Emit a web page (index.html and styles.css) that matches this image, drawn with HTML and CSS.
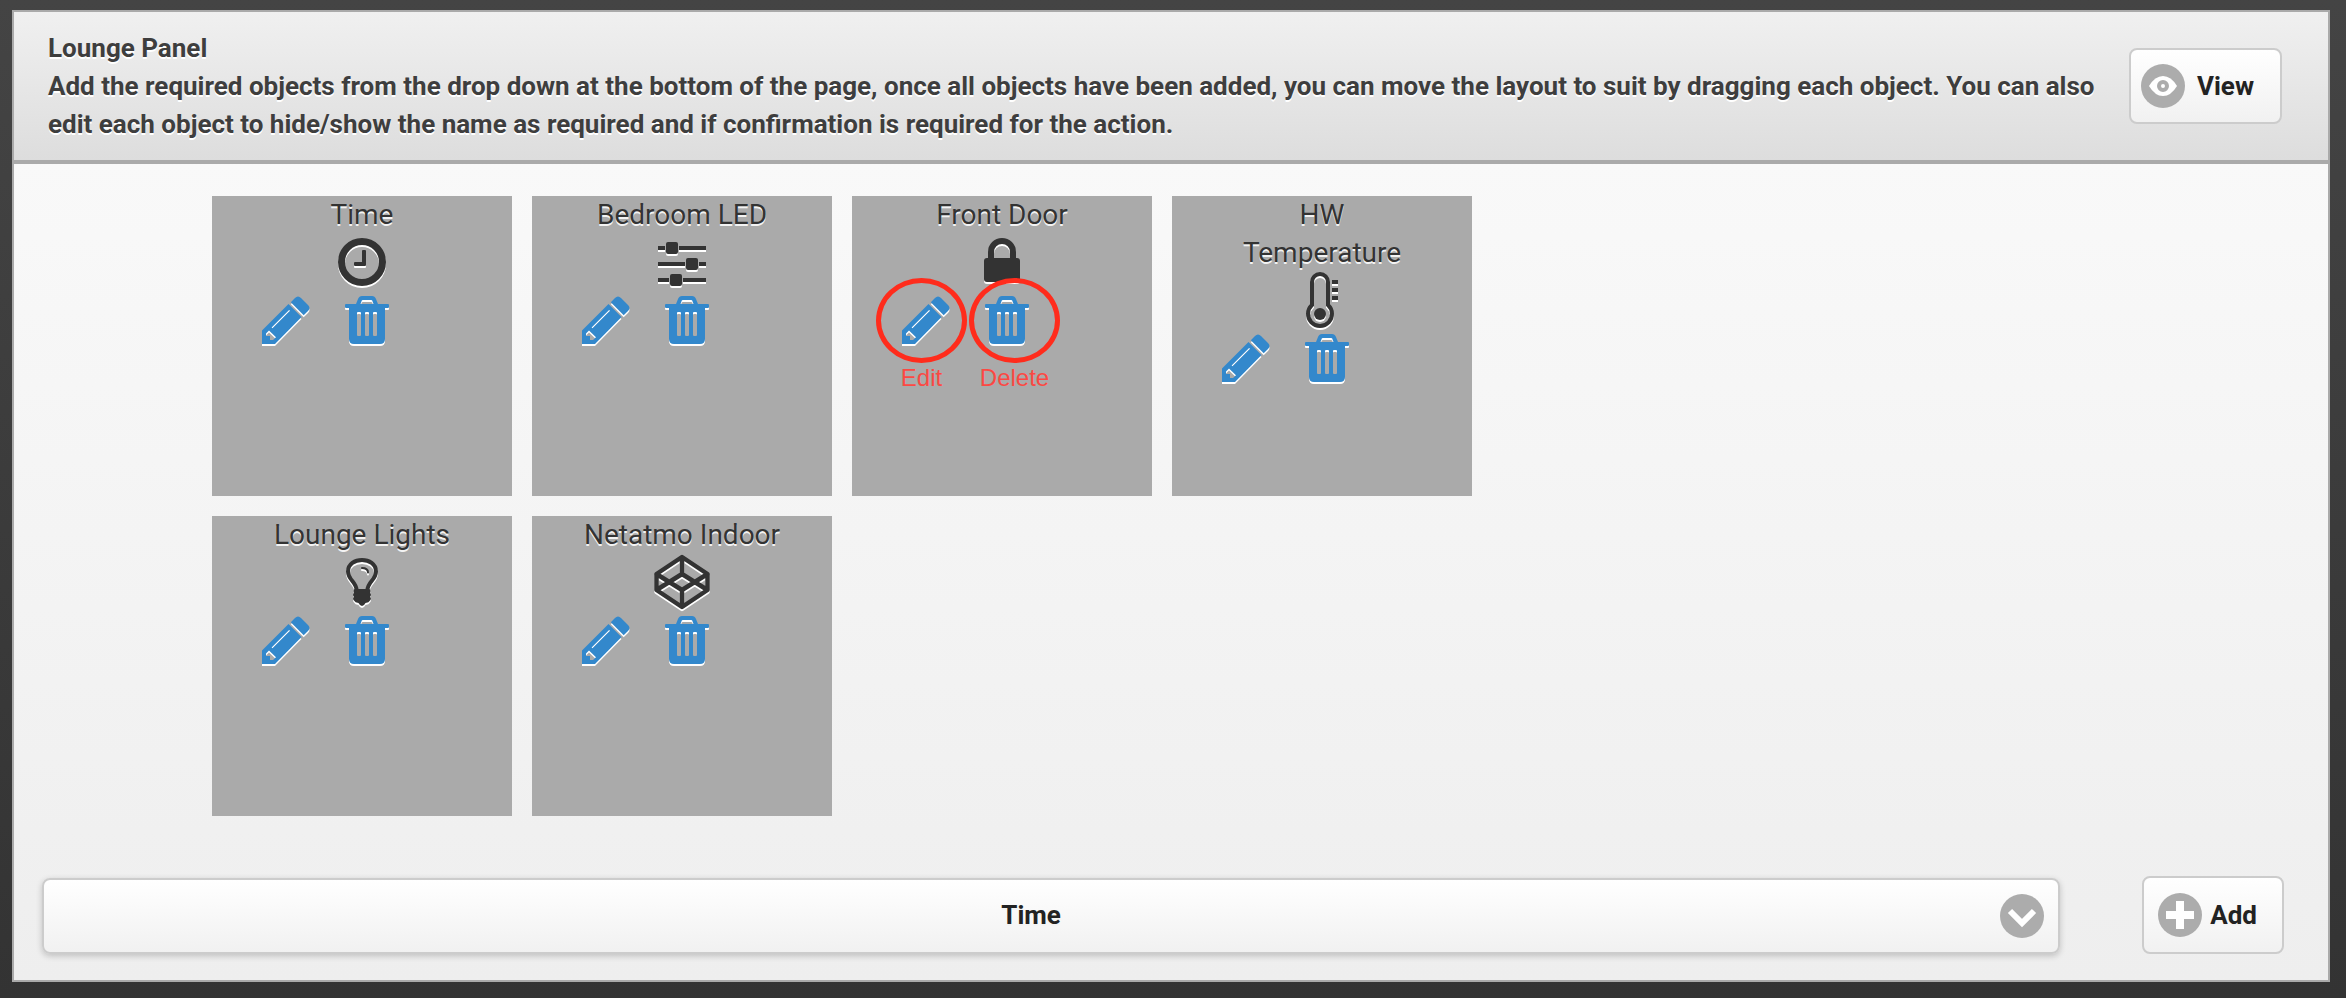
FILE: index.html
```
<!DOCTYPE html>
<html lang="en">
  <head>
    <meta charset="UTF-8" />
    <meta name="viewport" content="width=device-width, initial-scale=1.0" />
    <title>Lounge Panel</title>
    <link rel="stylesheet" href="styles.css" />
  </head>
  <body>
    <!-- shared icons -->
    <svg class="icon-defs" aria-hidden="true">
      <symbol id="pencil" viewBox="0 0 48 48">
        <path
          fill-rule="evenodd"
          d="M0 34.5L26.5 8l13 13L13 48H0zM4 37.5V40h4v4h3l3-2.8L7 34.4zM9.6 31.4l.9.9L28 14.8l-.9-.9z"
        />
        <path d="M28.8 6.2L33 2q3-3 6 0l7 7q3 3 0 6l-4.300 4.200z" />
      </symbol>
      <symbol id="trash" viewBox="0 0 44 48">
        <path
          fill-rule="evenodd"
          d="M11 8l2-5q1.200-3 4-3h10q2.800 0 4 3l2 5h10q1 0 1 1v2q0 1-1 1h-3v31q0 5-5 5H9q-5 0-5-5V12H1q-1 0-1-1V9q0-1 1-1zM15.500 8h13l-1.300-3.400q-.3-.6-1-.6h-8.400q-.7 0-1 .6zM12 17v22q0 1 1 1h2q1 0 1-1V17q0-1-1-1h-2q-1 0-1 1zM20 17v22q0 1 1 1h2q1 0 1-1V17q0-1-1-1h-2q-1 0-1 1zM28 17v22q0 1 1 1h2q1 0 1-1V17q0-1-1-1h-2q-1 0-1 1z"
        />
      </symbol>
    </svg>

    <div class="panel">
      <div class="panel-header">
        <div class="panel-text">
          Lounge Panel<br />
          Add the required objects from the drop down at the bottom of the page,
          once all objects have been added, you can move the layout to suit by
          dragging each object. You can also edit each object to hide/show the
          name as required and if confirmation is required for the action.
        </div>
        <button type="button" class="btn view-btn">
          <svg class="btn-icon" viewBox="0 0 44 44" aria-hidden="true">
            <circle cx="22" cy="22" r="22" fill="#acacac" />
            <path d="M8 22Q14 12 22 12t14 10Q30 32 22 32T8 22z" fill="#fff" />
            <circle cx="22" cy="22" r="4" fill="#fff" stroke="#acacac" stroke-width="4" />
          </svg>
          View
        </button>
      </div>

      <div class="tiles">
        <div class="tile">
          <div class="tile-name">Time</div>
          <div class="tile-icon">
            <svg width="48" height="48" viewBox="0 0 48 48">
              <circle cx="24" cy="24" r="20.5" fill="none" stroke="#333" stroke-width="7" />
              <path d="M25 12h2q1 0 1 1v14q0 1-1 1H17q-1 0-1-1v-2q0-1 1-1h7V13q0-1 1-1z" />
            </svg>
          </div>
          <div class="tile-actions">
            <button type="button" aria-label="Edit"><svg width="48" height="48"><use href="#pencil" /></svg></button>
            <button type="button" aria-label="Delete"><svg width="44" height="48"><use href="#trash" /></svg></button>
          </div>
        </div>

        <div class="tile">
          <div class="tile-name">Bedroom LED</div>
          <div class="tile-icon">
            <svg width="48" height="48" viewBox="0 0 48 48">
              <path d="M0 8h7v4H0zM21 8h27v4H21zM0 24h27v4H0zM41 24h7v4h-7zM0 40h11v4H0zM25 40h23v4H25z" />
              <rect x="8" y="4" width="12" height="12" rx="2" />
              <rect x="28" y="20" width="12" height="12" rx="2" />
              <rect x="12" y="36" width="12" height="12" rx="2" />
            </svg>
          </div>
          <div class="tile-actions">
            <button type="button" aria-label="Edit"><svg width="48" height="48"><use href="#pencil" /></svg></button>
            <button type="button" aria-label="Delete"><svg width="44" height="48"><use href="#trash" /></svg></button>
          </div>
        </div>

        <div class="tile">
          <div class="tile-name">Front Door</div>
          <div class="tile-icon">
            <svg width="36" height="48" viewBox="0 0 36 48">
              <path d="M7 22v-8a11 11 0 0 1 22 0v8" fill="none" stroke="#333" stroke-width="6" />
              <rect y="20" width="36" height="24" rx="3" />
            </svg>
          </div>
          <div class="tile-actions">
            <button type="button" aria-label="Edit"><svg width="48" height="48"><use href="#pencil" /></svg></button>
            <button type="button" aria-label="Delete"><svg width="44" height="48"><use href="#trash" /></svg></button>
          </div>
          <div class="callouts">
            <div class="callout">Edit</div>
            <div class="callout">Delete</div>
          </div>
        </div>

        <div class="tile">
          <div class="tile-name">HW Temperature</div>
          <div class="tile-icon">
            <svg width="32" height="56" viewBox="0 0 32 56">
              <path d="M6 33V10a8 8 0 0 1 16 0v23A12 12 0 1 1 6 33z" fill="none" stroke="#333" stroke-width="4" />
              <circle cx="14" cy="42" r="6" />
              <path d="M26 8h6v4h-6zM26 16h6v4h-6zM26 24h6v4h-6z" />
            </svg>
          </div>
          <div class="tile-actions">
            <button type="button" aria-label="Edit"><svg width="48" height="48"><use href="#pencil" /></svg></button>
            <button type="button" aria-label="Delete"><svg width="44" height="48"><use href="#trash" /></svg></button>
          </div>
        </div>

        <div class="tile">
          <div class="tile-name">Lounge Lights</div>
          <div class="tile-icon">
            <svg width="32" height="48" viewBox="0 0 32 48">
              <path d="M10.500 32C10.500 24 2 22 2 13.500 2 6 9 2 16 2s14 4 14 11.500C30 22 21.500 24 21.500 32" fill="none" stroke="#333" stroke-width="4" />
              <path d="M8.500 31h15q1.500 1.500.5 3.500 1.500 2 .2 4 1.300 2-.2 4-1 2-4.500 2.500-1.500 3-3.500 3t-3.500-3Q9 44.500 8 42.500q-1.500-2-.2-4-1.300-2 .2-4-1-2 .5-3.500z" />
              <path d="M16 10q6 0 6 4.500" fill="none" stroke="#333" stroke-width="2" stroke-linecap="round" />
            </svg>
          </div>
          <div class="tile-actions">
            <button type="button" aria-label="Edit"><svg width="48" height="48"><use href="#pencil" /></svg></button>
            <button type="button" aria-label="Delete"><svg width="44" height="48"><use href="#trash" /></svg></button>
          </div>
        </div>

        <div class="tile">
          <div class="tile-name">Netatmo Indoor</div>
          <div class="tile-icon">
            <svg width="56" height="56" viewBox="0 0 56 56">
              <path d="M28 3l25.500 17v16L28 53 2.500 36V20zM28 3v17M28 36v17M2.500 20L28 36l25.500-16M2.500 36L28 20l25.500 16" fill="none" stroke="#333" stroke-width="4.500" stroke-linejoin="round" />
            </svg>
          </div>
          <div class="tile-actions">
            <button type="button" aria-label="Edit"><svg width="48" height="48"><use href="#pencil" /></svg></button>
            <button type="button" aria-label="Delete"><svg width="44" height="48"><use href="#trash" /></svg></button>
          </div>
        </div>
      </div>

      <div class="add-form">
        <div class="select-wrap">
          <select class="object-select" aria-label="Object">
            <option>Time</option>
            <option>Bedroom LED</option>
            <option>Front Door</option>
            <option>HW Temperature</option>
            <option>Lounge Lights</option>
            <option>Netatmo Indoor</option>
          </select>
          <svg class="btn-icon select-icon" viewBox="0 0 44 44" aria-hidden="true">
            <circle cx="22" cy="22" r="22" fill="#acacac" />
            <path d="M10 17l12 12 12-12" fill="none" stroke="#fff" stroke-width="6" />
          </svg>
        </div>
        <button type="button" class="btn add-btn">
          <svg class="btn-icon" viewBox="0 0 44 44" aria-hidden="true">
            <circle cx="22" cy="22" r="22" fill="#acacac" />
            <path d="M18 8h8v10h10v8H26v10h-8V26H8v-8h10z" fill="#fff" />
          </svg>
          Add
        </button>
      </div>
    </div>
  </body>
</html>
```

FILE: styles.css
```
* {
  box-sizing: border-box;
}

html {
  min-height: 100%;
  background: linear-gradient(#444, #333);
}

body {
  margin: 0;
  padding: 10px 16px 16px 12px;
  font-family: Roboto, "Liberation Sans", sans-serif;
  font-size: 26px;
  line-height: 38px;
  color: #333;
}

.icon-defs {
  display: none;
}

.panel {
  border: 2px solid #aaa;
  background: linear-gradient(#fbfbfb, #eee);
}

.panel-header {
  display: flex;
  align-items: center;
  gap: 30px;
  padding: 17px 46px 17px 34px;
  border-bottom: 4px solid #aaa;
  background: linear-gradient(#f0f0f0, #ddd);
}

.panel-text {
  flex: 1;
  font-weight: bold;
  color: #3e3e3e;
  text-shadow: 0 2px 0 #fff;
}

.btn {
  display: flex;
  align-items: center;
  flex-shrink: 0;
  border: 2px solid #ccc;
  border-radius: 8px;
  background: linear-gradient(#fff, #f1f1f1);
  font-family: inherit;
  font-size: 26px;
  line-height: 38px;
  font-weight: bold;
  color: #222;
  text-shadow: 0 2px 0 #f3f3f3;
  cursor: pointer;
}

.btn-icon {
  width: 44px;
  height: 44px;
}

.view-btn {
  gap: 12px;
  padding: 14px 26px 14px 10px;
}

.add-btn {
  gap: 8px;
  padding: 15px 25px 15px 14px;
}

.tiles {
  display: grid;
  grid-template-columns: repeat(4, 300px);
  grid-auto-rows: 300px;
  gap: 20px;
  padding: 32px 0 60px 198px;
}

.tile {
  position: relative;
  padding: 0 50px;
  background-color: #aaa;
}

.tile-name {
  font-size: 28px;
  text-align: center;
  text-shadow: 0 2px 0 #f3f3f3;
}

.tile-icon {
  display: flex;
  justify-content: center;
  align-items: center;
  height: 56px;
  fill: #333;
}

.tile svg {
  display: block;
  overflow: visible;
  filter: drop-shadow(0 2px 0 #fff);
}

.tile-actions {
  display: flex;
  gap: 35px;
  padding-top: 6px;
}

.tile-actions button {
  padding: 0;
  border: none;
  background: none;
  fill: #3388cc;
  cursor: pointer;
}

.callouts {
  position: absolute;
  top: 82px;
  left: 24px;
  display: flex;
  gap: 2px;
}

.callout {
  width: 91px;
  font-family: "Liberation Sans", Arial, sans-serif;
  font-size: 24px;
  text-align: center;
  color: #fc4843;
  pointer-events: none;
}

.callout::before {
  content: "";
  display: block;
  box-sizing: border-box;
  height: 85px;
  margin-bottom: -4px;
  border: 5px solid #ff2c1c;
  border-radius: 50%;
}

.add-form {
  display: flex;
  align-items: flex-end;
  gap: 82px;
  padding: 0 44px 26px 28px;
}

.select-wrap {
  position: relative;
  flex: 1;
}

.object-select {
  display: block;
  width: 100%;
  padding: 16px 60px 18px 20px;
  border: 2px solid #ccc;
  border-radius: 8px;
  background: linear-gradient(#fff, #f1f1f1);
  box-shadow: 0 2px 6px rgba(0, 0, 0, 0.2);
  appearance: none;
  font-family: inherit;
  font-size: 26px;
  line-height: 38px;
  font-weight: bold;
  text-align: center;
  text-align-last: center;
  color: #222;
  text-shadow: 0 2px 0 #f3f3f3;
  cursor: pointer;
}

.select-icon {
  position: absolute;
  top: 16px;
  right: 16px;
  pointer-events: none;
}
```
